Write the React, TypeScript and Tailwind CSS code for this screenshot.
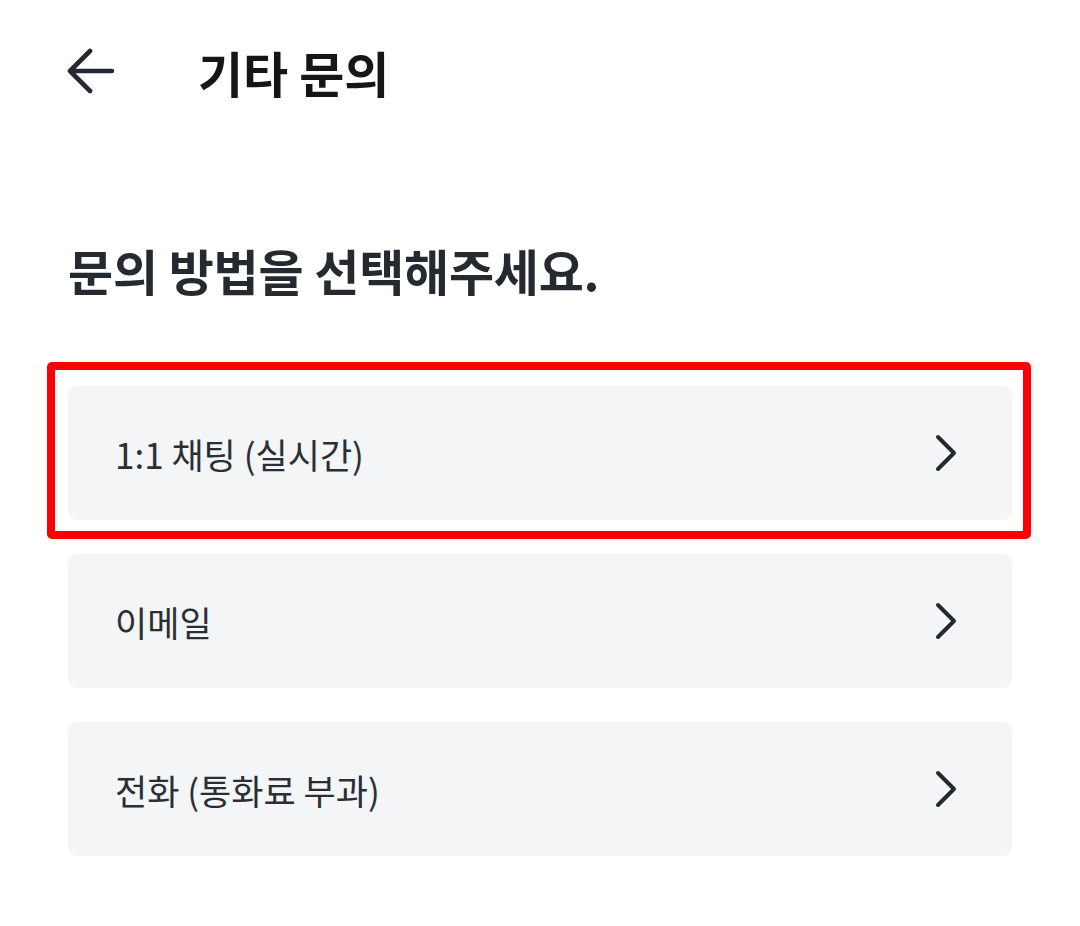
const font = { fontFamily: '"Noto Sans CJK KR", "Noto Sans", sans-serif' }

const items = [
  { label: '1:1 채팅 (실시간)', highlight: true },
  { label: '이메일' },
  { label: '전화 (통화료 부과)' },
]

const Chevron = () => (
  <svg width="22" height="38" viewBox="0 0 22 38" fill="none">
    <path d="M3 3l16 16L3 35" stroke="#252a31" strokeWidth="4" strokeLinecap="round" strokeLinejoin="round" />
  </svg>
)

const BackArrow = () => (
  <svg width="50" height="46" viewBox="0 0 50 46" fill="none">
    <path d="M24 3L4 23l20 20M4 23h42" stroke="#252a31" strokeWidth="4.6" strokeLinecap="round" strokeLinejoin="round" />
  </svg>
)

export default function App() {
  return (
    <div className="min-h-[926px] w-[1080px] bg-white" style={font}>
      {/* header */}
      <div className="flex h-[142px] items-center pl-[66px]">
        <BackArrow />
        <h1 className="ml-[82px] text-[49px] font-bold leading-none text-[#161616]">기타 문의</h1>
      </div>

      <div className="px-[68px]">
        <h2 className="mt-[103px] text-[49px] font-bold leading-none tracking-[-0.2px] text-[#252a31]">
          문의 방법을 선택해주세요.
        </h2>

        <div className="mt-[92px] flex flex-col gap-[34px]">
          {items.map((item) => (
            <div key={item.label} className="relative">
              <div className="flex h-[134px] items-center justify-between rounded-[10px] bg-[#f4f5f7] pl-[47px] pr-[55px]">
                <span className="text-[35px] leading-none text-[#2a2f36]">{item.label}</span>
                <Chevron />
              </div>
              {item.highlight && (
                <div className="pointer-events-none absolute -bottom-[19px] -left-[21px] -right-[19px] -top-[24px] rounded-[5px] border-[8px] border-[#ff0000]" />
              )}
            </div>
          ))}
        </div>
      </div>
    </div>
  )
}
